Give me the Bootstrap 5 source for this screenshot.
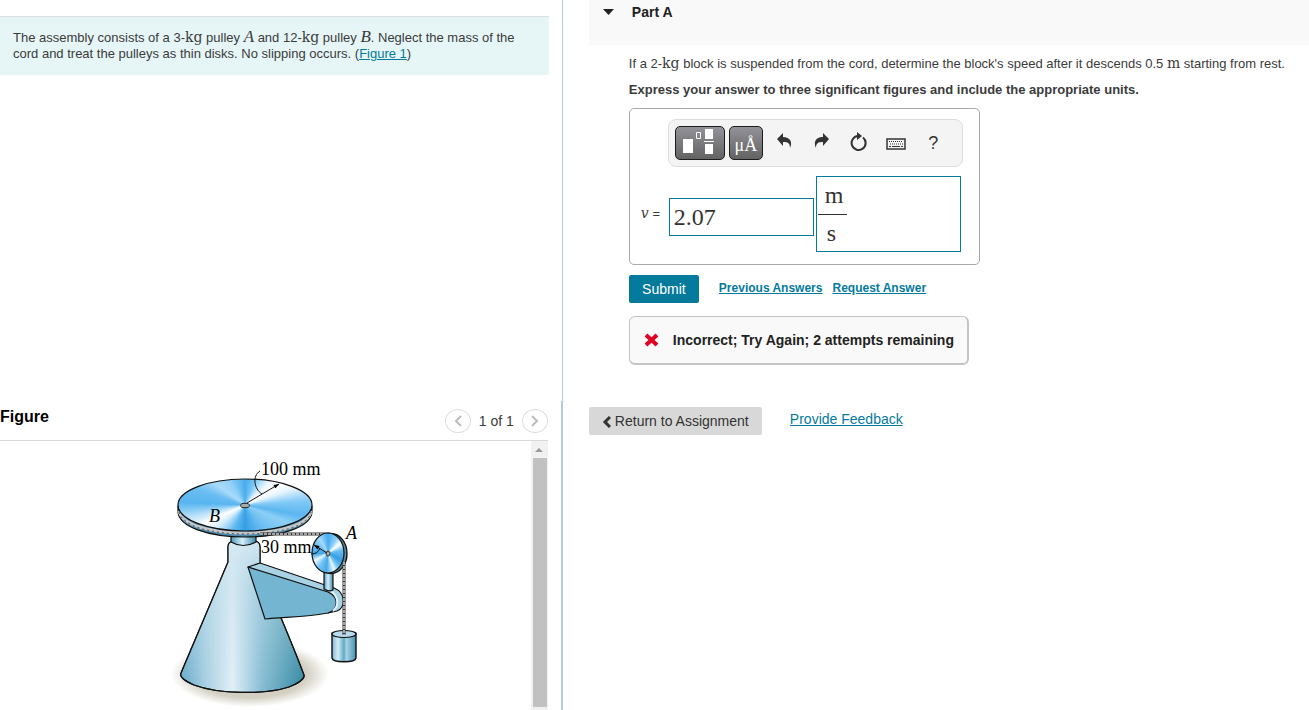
<!DOCTYPE html>
<html lang="en">
<head>
<meta charset="utf-8">
<meta name="viewport" content="width=device-width, initial-scale=1">
<title>Part A</title>
<link href="https://cdn.jsdelivr.net/npm/bootstrap@5.3.0/dist/css/bootstrap.min.css" rel="stylesheet">
<style>
:root{--teal:#047a9c;--ink:#3b3b3b}
body{font-family:"Liberation Sans",Arial,sans-serif;font-size:13px;line-height:16px;color:var(--ink);background:#fff}
a{color:var(--teal)}
.shell{display:grid;grid-template-columns:minmax(0,43fr) minmax(0,57fr)}
.side{display:grid;grid-template-rows:minmax(0,13fr) minmax(0,10fr)}
.mth{font-family:"DejaVu Serif",serif;font-size:14px;line-height:12px}
.cap{font-family:"Liberation Serif",serif;font-size:17px;line-height:12px}
.upper{border-right:1px solid #b8cbdc;padding:16px 13px 0 0}
.lower{border-right:2px solid #b8cbdc;padding-right:13px}
.intro{background:#e6f6f6;border-top:1px solid #dcdfdf;padding:13px 13px 13px}
.fig-head{height:40px;border-bottom:1px solid #d9d9d9}
.fig-head h2{font-size:16px;line-height:18px;color:#000}
.pager{font-size:14px}
.round{width:26px;height:24px;border:1px solid #ddd;border-radius:50%;background:#fff}
.drawing{width:215px;height:260px;margin:9px 0 0 160px}
.track{width:17px;background:#f1f1f1;flex:none;padding:0 1px 3px 2px}
.thumb{background:#c1c1c1}
.work{padding-left:26px}
.part-head{background:#f9f9f9;padding:4px 14px 25px;gap:18px}
.part-head h1{font-size:14px;line-height:16px;color:#222}
.part-body{padding:11px 20px 0 40px}
.part-body p{margin-bottom:10px}
.answer{width:351px;border:1px solid #aaa;border-radius:5px;padding:10px 16px 12px 11px}
.tools{height:48px;margin-left:27px;border:1px solid #ddd;border-radius:8px;background:#f4f4f4;padding:0 6px}
.tile{height:34px;border:1px solid #1c1c1c;border-radius:5px;background:linear-gradient(#929299,#636363);color:#fff}
.tile-wide{width:50px}
.tool{width:37px;height:34px;border:0;background:none;color:#333;font-size:18px}
.mu{width:34px;font-family:"Liberation Serif",serif;font-size:18px;line-height:36px}
.entry{margin-top:9px}
.entry label{width:28px}
.field{width:145px;border:1px solid var(--teal);border-radius:0;font:24px/28px "Liberation Serif",serif;color:#333;background:#fff}
.amount{height:38px;padding:0 4px;margin:6px 2px 0 0}
.unit{height:76px;padding:4px 1px}
.unit .num{border-bottom:1px solid #333;width:29px;height:34px;padding-left:7px}
.unit .den{width:29px;padding:4px 0 0 9px}
.actions{margin-top:10px}
.send{background:var(--teal);color:#fff;border:0;border-radius:2px;font-size:14px;width:70px;height:28px;margin-right:20px}
.aux{font-size:12px;font-weight:700}
.aux a{margin-right:10px;padding-bottom:2px}
.verdict{width:340px;height:49px;margin-top:13px;gap:14px;font-size:14px;background:#f9f9f9;color:#222;border:1px solid #c4c4c4;border-width:1px 2px 2px 1px;border-radius:6px;padding-left:14px}
.back{background:#d8d8d8;border:0;border-radius:2px;width:173px;height:28px;font-size:14px;color:#333}
.foot{font-size:14px;margin-top:42px}
.foot a{padding-bottom:4px}
.disc-b{width:134px;height:52px;border-radius:50%;background:conic-gradient(#48adec 0deg,#79c6f6 22deg,#e8f6fe 46deg,#fff 62deg,#e2f3fd 72deg,#82caf6 86deg,#5bb6f0 100deg,#8dcff7 112deg,#6cbff3 140deg,#359fe4 180deg,#5fb9f1 205deg,#d5eefc 232deg,#fff 246deg,#b9e1fa 258deg,#58b5f0 272deg,#6abdf2 288deg,#a9dafa 305deg,#93d1f8 325deg,#48adec 360deg)}
.disc-a{width:32px;height:40px;border-radius:50%;background:conic-gradient(#45aaf0 0deg,#8bd0fa 30deg,#fff 52deg,#65bcf3 80deg,#359de4 120deg,#74c5f5 145deg,#e8f7ff 160deg,#45a9ea 185deg,#7bc8f8 215deg,#eef9ff 240deg,#3fa7ea 265deg,#62b9f2 300deg,#a5dafb 330deg,#45aaf0 360deg)}
</style>
<script src="https://cdn.jsdelivr.net/npm/bootstrap@5.3.0/dist/js/bootstrap.bundle.min.js"></script>
</head>
<body>
<div class="shell vh-100 overflow-hidden">
  <aside class="side vh-100">
    <section class="upper">
      <p class="intro mb-0">The assembly consists of a 3-<span class="mth">kg</span> pulley <i class="cap">A</i> and 12-<span class="mth">kg</span> pulley <i class="cap">B</i>. Neglect the mass of the cord and treat the pulleys as thin disks. No slipping occurs. (<a href="#figure">Figure 1</a>)</p>
    </section>
    <section class="lower d-flex flex-column" id="figure">
      <header class="fig-head d-flex align-items-center justify-content-between flex-shrink-0">
        <h2 class="fw-bold mb-2">Figure</h2>
        <div class="pager d-flex align-items-center">
          <button class="round p-0 d-flex align-items-center justify-content-center" aria-label="Previous figure"><svg width="8" height="12" fill="none" stroke="#bbb" stroke-width="2"><path d="M7 1 2 6l5 5"/></svg></button>
          <span class="px-2">1 of 1</span>
          <button class="round p-0 d-flex align-items-center justify-content-center" aria-label="Next figure"><svg width="8" height="12" fill="none" stroke="#bbb" stroke-width="2"><path d="m1 1 5 5-5 5"/></svg></button>
        </div>
      </header>
      <div class="d-flex flex-grow-1 overflow-hidden">
        <div class="flex-grow-1 overflow-hidden">
          <svg class="drawing d-block" viewBox="160 450 215 260" role="img" aria-label="Pulley assembly" stroke-linejoin="round">
            <defs>
              <linearGradient id="cone"><stop offset="0" stop-color="#63a8c7"/><stop offset=".2" stop-color="#a6cfe2"/><stop offset=".42" stop-color="#e2f0f8"/><stop offset=".65" stop-color="#88bed4"/><stop offset="1" stop-color="#2f87a0"/></linearGradient>
              <linearGradient id="lighten" x2="0" y2="1"><stop offset="0" stop-color="#d5e9f3" stop-opacity=".95"/><stop offset=".3" stop-color="#c5e0ed" stop-opacity=".5"/><stop offset="1" stop-color="#c5e0ed" stop-opacity="0"/></linearGradient>
              <linearGradient id="neck"><stop offset="0" stop-color="#4d99bb"/><stop offset=".45" stop-color="#d7eef8"/><stop offset="1" stop-color="#3d8bad"/></linearGradient>
              <linearGradient id="block"><stop offset="0" stop-color="#7fb9d2"/><stop offset=".25" stop-color="#d5edf6"/><stop offset=".5" stop-color="#5fa9c8"/><stop offset=".6" stop-color="#a7d3e4"/><stop offset="1" stop-color="#4292b0"/></linearGradient>
              <radialGradient id="shade"><stop offset=".72" stop-color="#d3d0c3"/><stop offset="1" stop-color="#d3d0c3" stop-opacity="0"/></radialGradient>
              <marker id="tip" viewBox="0 0 8 6" refX="8" refY="3" markerWidth="6" markerHeight="4" orient="auto"><path d="m0 0 8 3-8 3z"/></marker>
            </defs>
            <ellipse cx="250" cy="674" rx="79" ry="33" fill="url(#shade)"/>
            <g stroke="#111" stroke-width="1.2">
              <path d="M228 562V547q0-5 5-6h22q5 1 5 6v18c13 36 30 72 44 110 1 5-8 9-15 12-25 8-71 7-95-2-9-4-15-8-13-12z" fill="url(#cone)"/>
              <path d="M228 562V547q0-5 5-6h22q5 1 5 6v18c13 36 30 72 44 110 1 5-8 9-15 12-25 8-71 7-95-2-9-4-15-8-13-12z" fill="url(#lighten)"/>
              <path d="M231 533v9q12 7 25 0v-9z" fill="url(#neck)"/>
              <path d="m248 567 12-4 74 25c12 5 12 19 3 23l-9 2z" fill="#a9d3e5"/>
              <path d="m248 567 80 25c11 5 11 17 0 21-20 4-42 4-63 6z" fill="#74b5d1"/>
              <path d="M331 591c8 6 8 15 2 20" fill="none" stroke="#e5f3f9" stroke-width="2"/>
              <path d="M324 571v18q5 3 9 1v-19z" fill="url(#neck)"/>
              <path d="M178 506v6c1 15 31 25 67 25s66-10 67-25v-6z" fill="#4b89aa"/>
            </g>
            <path d="M179 511c3 14 32 22 66 22s64-8 66-22" fill="none" stroke="#c3c7c9" stroke-width="3"/>
            <path d="M179 512c3 14 32 22 66 22s64-8 66-22" fill="none" stroke="#555" stroke-dasharray="2 3"/>
            <foreignObject x="178" y="479" width="134" height="52"><div xmlns="http://www.w3.org/1999/xhtml" class="disc-b"></div></foreignObject>
            <ellipse cx="245" cy="505" rx="67" ry="26" fill="none" stroke="#111" stroke-width="1.2"/>
            <ellipse cx="245" cy="505.5" rx="4.5" ry="2.2" fill="#aaa" stroke="#222"/>
            <path d="M260 534h70" stroke="#333" stroke-width="3"/><path d="M260 534h70" stroke="#c8c8c8" stroke-width="1.5" stroke-dasharray="3 1"/>
            <ellipse cx="331" cy="553.5" rx="16" ry="20" fill="#5f8ba0" stroke="#111" stroke-width="1.4"/>
            <foreignObject x="312" y="533" width="32" height="40"><div xmlns="http://www.w3.org/1999/xhtml" class="disc-a"></div></foreignObject>
            <ellipse cx="328" cy="553" rx="16" ry="20" fill="none" stroke="#111" stroke-width="1.2"/>
            <ellipse cx="328" cy="553.5" rx="2" ry="2.5" fill="#aaa" stroke="#333"/>
            <path d="M332 633v25c1 5 23 5 24 0v-25z" fill="url(#block)" stroke="#111" stroke-width="1.4"/>
            <ellipse cx="344" cy="634" rx="12" ry="3.5" fill="#b8dceb" stroke="#111" stroke-width="1.2"/>
            <path d="M344 562v73" stroke="#333" stroke-width="3"/><path d="M344 562v73" stroke="#ccc" stroke-width="1.5" stroke-dasharray="3 1"/>
            <g fill="none" stroke="#111">
              <path d="M247 503 279 484" marker-end="url(#tip)"/>
              <path d="M260 471c-8 5-6 18 2 23"/>
              <path d="M327 553l-13-8" marker-end="url(#tip)"/>
              <path d="M311 554q7 0 9-6"/>
            </g>
            <g font-family="Liberation Serif, serif" font-size="18" fill="#000"><text x="261" y="475">100 mm</text><text x="261" y="553">30 mm</text><g font-style="italic"><text x="209" y="522">B</text><text x="346" y="539">A</text></g></g>
          </svg>
        </div>
        <div class="track d-flex flex-column" aria-hidden="true">
          <svg width="13" height="17" class="flex-shrink-0"><path d="m2 11 4-4 4 4z" fill="#9a9a9a"/></svg>
          <div class="thumb flex-grow-1"></div>
        </div>
      </div>
    </section>
  </aside>
  <main class="work">
    <header class="part-head d-flex align-items-center">
      <svg width="11" height="6"><path d="M0 0h11L5.5 6z" fill="#222"/></svg>
      <h1 class="fw-bold mb-0">Part A</h1>
    </header>
    <div class="part-body">
      <p>If a 2-<span class="mth">kg</span> block is suspended from the cord, determine the block's speed after it descends 0.5 <span class="mth">m</span> starting from rest.</p>
      <p class="fw-bold">Express your answer to three significant figures and include the appropriate units.</p>
      <div class="answer">
        <div class="tools d-flex align-items-center">
          <button class="tile tile-wide p-0 me-1 d-flex align-items-center justify-content-center" aria-label="Templates"><svg class="mb-1" width="34" height="26" fill="#fff"><path d="M0 11h10v14H0zM22 1h8v10h-8zM22 16h8v10h-8zM21 13h10v1H21z"/><path d="M13.500 4.500h4v6h-4z" fill="none" stroke="#fff"/></svg></button>
          <button class="tile mu p-0 me-1" aria-label="Symbols">μÅ</button>
          <button class="tool p-0" aria-label="Undo"><svg class="mb-1" width="16" height="16" fill="#333"><path d="M6 0v4c7 0 10 5 7 11 0-5-2-6-7-6v4L0 6z"/></svg></button>
          <button class="tool p-0" aria-label="Redo"><svg class="mb-1" width="16" height="16" fill="#333"><path d="M9 0v4c-7 0-10 5-7 11 0-5 2-6 7-6v4l6-7z"/></svg></button>
          <button class="tool p-0" aria-label="Reset"><svg class="mb-1" width="18" height="20" fill="none" stroke="#333" stroke-width="2"><path d="M13 6.500A7 7 0 1 1 8 5"/><path d="m7 1 5 4-5 4z" fill="#333" stroke="none"/></svg></button>
          <button class="tool p-0" aria-label="Keyboard"><svg width="20" height="12" fill="none" stroke="#333"><path d="M1 1h18v10H1z" stroke-width="1.5"/><path d="M3 3.500h14M4 6h13" stroke-dasharray="1 1"/><path d="M3 8.500h2m1 0h8m1 0h2"/></svg></button>
          <button class="tool p-0" aria-label="Help">?</button>
        </div>
        <div class="entry d-flex align-items-center">
          <label for="val" class="text-nowrap"><i class="mth">v</i> =</label>
          <input id="val" class="field amount" value="2.07">
          <div class="field unit" role="textbox" contenteditable="true" aria-label="Units"><div class="num">m</div><div class="den">s</div></div>
        </div>
      </div>
      <div class="actions d-flex align-items-center aux">
        <button class="send">Submit</button>
        <a href="#previous">Previous Answers</a>
        <a href="#request">Request Answer</a>
      </div>
      <div class="verdict d-flex align-items-center fw-bold" role="status">
        <svg width="15" height="14" stroke="#e0001f" stroke-width="4"><path d="m2 2 11 10M13 2 2 12"/></svg>Incorrect; Try Again; 2 attempts remaining
      </div>
    </div>
    <footer class="foot d-flex align-items-center">
      <button class="back p-0"><svg width="9" height="12" fill="none" stroke="#333" stroke-width="3"><path d="M8 1 3 6l5 5"/></svg> Return to Assignment</button>
      <a href="#feedback" class="ms-4 ps-1">Provide Feedback</a>
    </footer>
  </main>
</div>
</body>
</html>
